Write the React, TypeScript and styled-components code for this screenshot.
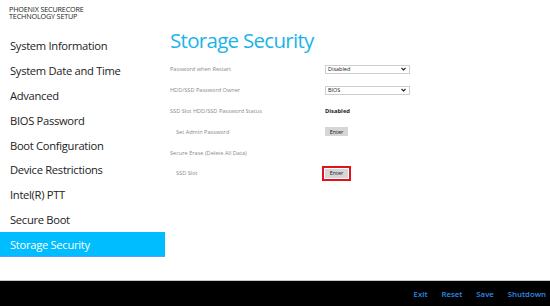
import React from "react";
import styled, { createGlobalStyle } from "styled-components";

const Global = createGlobalStyle`
  html, body { margin: 0; padding: 0; background: #fff; }
  body { font-family: "Open Sans", "Noto Sans", sans-serif; }
  * { box-sizing: border-box; }
`;

const Page = styled.div`
  width: 550px;
  height: 306px;
  display: flex;
  flex-direction: column;
  overflow: hidden;
`;

const Main = styled.div`
  flex: 1;
  display: flex;
  border-bottom: 1px solid #c8c8c8;
`;

const Sidebar = styled.div`
  width: 165px;
  display: flex;
  flex-direction: column;
`;

const Brand = styled.div`
  padding: 6px 0 0 9px;
  font-size: 7.2px;
  line-height: 7px;
  color: #222;
  letter-spacing: -0.15px;
  height: 33px;
`;

const NavList = styled.div`
  display: flex;
  flex-direction: column;
`;

const NavItem = styled.div<{ $active?: boolean }>`
  height: 24.9px;
  display: flex;
  align-items: center;
  padding-left: 10px;
  font-size: 11.2px;
  letter-spacing: -0.3px;
  color: ${(p) => (p.$active ? "#fff" : "#222")};
  background: ${(p) => (p.$active ? "#00bdff" : "transparent")};
  border-bottom: ${(p) => (p.$active ? "1px solid #5a9cff" : "none")};
`;

const Content = styled.div`
  flex: 1;
  padding: 25px 0 0 170px;
  margin-left: -165px;
  display: flex;
  flex-direction: column;
`;

const Title = styled.h1`
  margin: 0 0 4px 0;
  font-weight: 400;
  font-size: 20.5px;
  letter-spacing: -0.7px;
  line-height: 30px;
  color: #1ab4ea;
`;

const Row = styled.div<{ $indent?: boolean }>`
  display: flex;
  align-items: center;
  height: 20.8px;
  padding-left: ${(p) => (p.$indent ? "6px" : "0")};
`;

const Label = styled.div<{ $indent?: boolean }>`
  width: ${(p) => (p.$indent ? "149px" : "155px")};
  font-size: 5.6px;
  color: #8a8a8a;
`;

const SelectBox = styled.div`
  width: 85px;
  height: 9px;
  border: 1px solid #cfcfcf;
  display: flex;
  align-items: center;
  justify-content: space-between;
  padding: 0 3px 0 2px;
  font-size: 5.5px;
  color: #222;
`;

const Chevron = styled.svg`
  width: 5px;
  height: 4px;
`;

const Value = styled.div`
  font-size: 5.8px;
  font-weight: 700;
  color: #222;
`;

const EnterBtn = styled.div<{ $focused?: boolean }>`
  width: 23px;
  height: 9px;
  background: #d6d6d6;
  font-size: 5.5px;
  color: #222;
  display: flex;
  align-items: center;
  justify-content: center;
  outline: ${(p) => (p.$focused ? "2px solid #e0121f" : "none")};
  outline-offset: 1px;
`;

const Footer = styled.div`
  height: 25px;
  background: #000;
  display: flex;
  justify-content: flex-end;
  align-items: center;
  gap: 14px;
  padding-right: 4px;
`;

const FooterBtn = styled.span`
  color: #2a8fe8;
  font-size: 7.8px;
  font-weight: 600;
`;

const Select = ({ value }: { value: string }) => (
  <SelectBox>
    <span>{value}</span>
    <Chevron viewBox="0 0 10 8">
      <path d="M1 2 L5 6 L9 2" fill="none" stroke="#222" strokeWidth="2.2" />
    </Chevron>
  </SelectBox>
);

const navItems = [
  "System Information",
  "System Date and Time",
  "Advanced",
  "BIOS Password",
  "Boot Configuration",
  "Device Restrictions",
  "Intel(R) PTT",
  "Secure Boot",
  "Storage Security",
];

export default function App() {
  return (
    <Page>
      <Global />
      <Main>
        <Sidebar>
          <Brand>
            PHOENIX SECURECORE
            <br />
            TECHNOLOGY SETUP
          </Brand>
          <NavList>
            {navItems.map((n) => (
              <NavItem key={n} $active={n === "Storage Security"}>
                {n}
              </NavItem>
            ))}
          </NavList>
        </Sidebar>
        <Content>
          <Title>Storage Security</Title>
          <Row>
            <Label>Password when Restart</Label>
            <Select value="Disabled" />
          </Row>
          <Row>
            <Label>HDD/SSD Password Owner</Label>
            <Select value="BIOS" />
          </Row>
          <Row>
            <Label>SSD Slot HDD/SSD Password Status</Label>
            <Value>Disabled</Value>
          </Row>
          <Row $indent>
            <Label $indent>Set Admin Password</Label>
            <EnterBtn>Enter</EnterBtn>
          </Row>
          <Row>
            <Label>Secure Erase (Delete All Data)</Label>
          </Row>
          <Row $indent>
            <Label $indent>SSD Slot</Label>
            <EnterBtn $focused>Enter</EnterBtn>
          </Row>
        </Content>
      </Main>
      <Footer>
        <FooterBtn>Exit</FooterBtn>
        <FooterBtn>Reset</FooterBtn>
        <FooterBtn>Save</FooterBtn>
        <FooterBtn>Shutdown</FooterBtn>
      </Footer>
    </Page>
  );
}
